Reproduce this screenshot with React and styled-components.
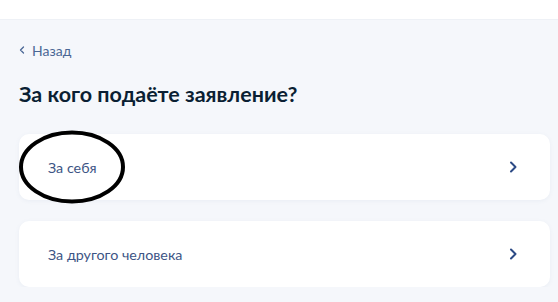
import React from 'react'
import styled, { createGlobalStyle } from 'styled-components'

const GlobalStyle = createGlobalStyle`
    body {
        margin: 0;
        background: #F5F7FB;
        font-family: Lato, "Noto Sans", sans-serif;
    }
`

const Header = styled.div`
    height: 19px;
    background: #FFFFFF;
    border-bottom: 1px solid #EEF1F6;
`

const Page = styled.div`
    padding: 21px 8px 0 19px;
    display: flex;
    flex-direction: column;
`

const BackLink = styled.a`
    display: flex;
    align-items: center;
    gap: 7px;
    height: 18px;
    font-size: 14px;
    color: #4A6795;
    text-decoration: none;
`

const Heading = styled.h1`
    margin: 21px 0 0 0;
    font-size: 21.5px;
    line-height: 28px;
    font-weight: 700;
    color: #0B1F33;
`

const List = styled.div`
    margin-top: 26px;
    display: flex;
    flex-direction: column;
    gap: 21px;
`

const Card = styled.div`
    position: relative;
    height: 66px;
    padding: 0 30px 0 29px;
    display: flex;
    align-items: center;
    justify-content: space-between;
    background: #FFFFFF;
    border-radius: 10px;
    box-shadow: 0 1px 4px rgba(102, 128, 170, 0.08);
`

const CardText = styled.span`
    font-size: 14.3px;
    color: #3D5585;
`

const Mark = styled.svg`
    position: absolute;
    left: 0;
    top: -4px;
    overflow: visible;
`

const Chevron = ({ size = 14, color = '#2C4A85', width = 2 }) => (
    <svg width={size} height={size} viewBox="0 0 14 14" fill="none">
        <path d="M5 2.5 L9.5 7 L5 11.5" stroke={color} strokeWidth={width} strokeLinecap="round" strokeLinejoin="round" />
    </svg>
)

const BackChevron = () => (
    <svg width="6" height="8" viewBox="0 0 6 8" fill="none">
        <path d="M4.5 1 L1.5 4 L4.5 7" stroke="#4A6795" strokeWidth="1.3" strokeLinecap="round" strokeLinejoin="round" />
    </svg>
)

const options = [
    { label: 'За себя', marked: true },
    { label: 'За другого человека' }
]

export default function App() {
    return (
        <>
            <GlobalStyle />
            <Header />
            <Page>
                <BackLink href="#">
                    <BackChevron />
                    Назад
                </BackLink>
                <Heading>За кого подаёте заявление?</Heading>
                <List>
                    {options.map((option, key) => (
                        <Card key={key}>
                            <CardText>{option.label}</CardText>
                            <Chevron />
                            {option.marked && (
                                <Mark width="106" height="74" viewBox="0 0 106 74">
                                    <ellipse cx="53" cy="37" rx="51" ry="34.5" fill="none" stroke="#000" strokeWidth="4" />
                                </Mark>
                            )}
                        </Card>
                    ))}
                </List>
            </Page>
        </>
    )
}
